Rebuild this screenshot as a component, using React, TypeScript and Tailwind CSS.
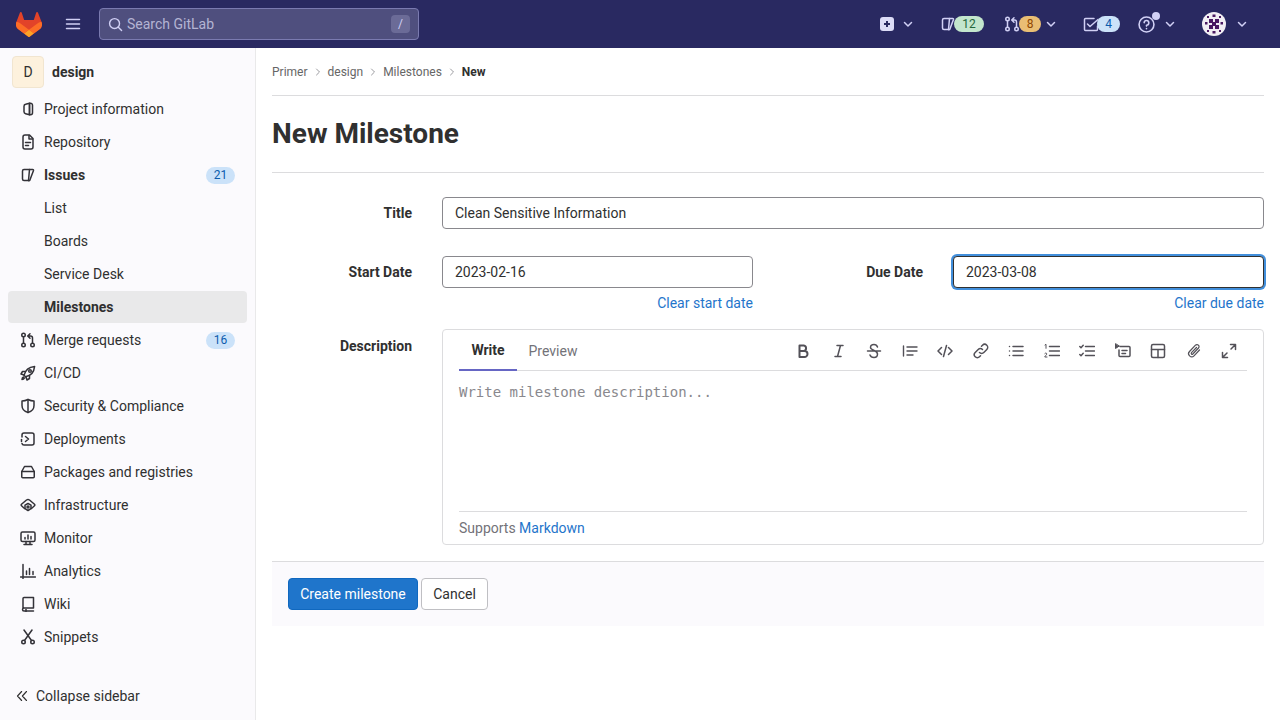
import React from "react";

type P = { children: React.ReactNode; className?: string; size?: number };
const Ic = ({ children, className = "", size = 16 }: P) => (
  <svg width={size} height={size} viewBox="0 0 16 16" fill="none" stroke="currentColor" strokeWidth="1.5" strokeLinecap="round" strokeLinejoin="round" className={"shrink-0 " + className}>
    {children}
  </svg>
);

const Chevron = ({ className = "" }: { className?: string }) => (
  <Ic className={className}><path d="M4.5 6.5 8 10l3.5-3.5" /></Ic>
);

const Logo = () => (
  <svg width="26" height="25" viewBox="0 0 25 24" className="shrink-0">
    <path d="m24.507 9.5-.034-.09L21.082.562a.896.896 0 0 0-1.694.091l-2.29 7.01H7.825L5.535.653a.898.898 0 0 0-1.694-.09L.451 9.411.416 9.5a6.297 6.297 0 0 0 2.09 7.278l.012.01.03.022 5.16 3.867 2.56 1.935 1.554 1.176a1.051 1.051 0 0 0 1.268 0l1.555-1.176 2.56-1.935 5.197-3.89.014-.01A6.297 6.297 0 0 0 24.507 9.5Z" fill="#E24329" />
    <path d="m24.507 9.5-.034-.09a11.44 11.44 0 0 0-4.56 2.051l-7.447 5.632 4.742 3.584 5.197-3.89.014-.01A6.297 6.297 0 0 0 24.507 9.5Z" fill="#FC6D26" />
    <path d="m7.707 20.677 2.56 1.935 1.555 1.176a1.051 1.051 0 0 0 1.268 0l1.555-1.176 2.56-1.935-4.743-3.584-4.755 3.584Z" fill="#FCA326" />
    <path d="M5.01 11.461a11.43 11.43 0 0 0-4.56-2.05L.416 9.5a6.297 6.297 0 0 0 2.09 7.278l.012.01.03.022 5.16 3.867 4.745-3.584-7.444-5.632Z" fill="#FC6D26" />
  </svg>
);

const icons: Record<string, React.ReactNode> = {
  info: <><path d="M9.5 2.2 5.6 3.3A2 2 0 0 0 4 5.2v5.6a2 2 0 0 0 1.6 1.9l3.9 1.1z" /><path d="M9.5 2.2h1a2 2 0 0 1 2 2v7.6a2 2 0 0 1-2 2h-1z" /></>,
  repo: <><path d="M3 3a2 2 0 0 1 2-2h4.5L13 4.5V13a2 2 0 0 1-2 2H5a2 2 0 0 1-2-2z" /><path d="M9 1.5V5h3.5M5.5 8.5h5M5.5 11.5h3" /></>,
  issues: <><path d="M9.5 2.5H4A1.5 1.5 0 0 0 2.5 4v8A1.5 1.5 0 0 0 4 13.5h4.5z" /><path d="M9.5 2.5h3.2a.8.8 0 0 1 .8 1L10 12.8a1 1 0 0 1-1.5.7" /></>,
  mr: <><circle cx="3.5" cy="3" r="1.75" /><circle cx="3.5" cy="13" r="1.75" /><circle cx="12.5" cy="13" r="1.75" /><path d="M3.5 5v6M12.5 11V6a2 2 0 0 0-2-2H8M10 1.7 7.7 4 10 6.3" /></>,
  rocket: <><path d="M5.5 11.8 4 10.3C5 6 8.5 2 14.6 1.4 14 7.500 10 11 5.500 11.8z" /><circle cx="10" cy="6" r="1.300" /><path d="M5 6.500H2.500L1 9l3 1M9.500 11v2.500L7 15l-1-3M3.500 12c-1 .5-1.500 1.500-1.500 2.500 1 0 2-.5 2.500-1.500" /></>,
  shield: <><path d="M8 1.500c2 1 4 1.500 6 1.500v4.500c0 3.500-2.500 6-6 7-3.500-1-6-3.500-6-7V3c2 0 4-.5 6-1.500z" /><path d="M8 1.500v13" /></>,
  deploy: <><path d="M2 6V4a2 2 0 0 1 2-2h8a2 2 0 0 1 2 2v8a2 2 0 0 1-2 2H4a2 2 0 0 1-2-1.500" /><path d="M5.500 5.500 8.500 8l-3 2.500" /><path d="M1.500 8.500v2" /></>,
  pkg: <><path d="M1.750 7.500h12.500v5.250a1 1 0 0 1-1 1H2.750a1 1 0 0 1-1-1z" /><path d="M1.750 7.500 4.500 2.500h7l2.750 5" /></>,
  infra: <><path d="M4.500 11.500 1.500 8.800a1 1 0 0 1 0-1.500L6.500 3a2.500 2.500 0 0 1 3 0l5 4.300a1 1 0 0 1 0 1.500l-3 2.700" /><path d="M8 6.500l3 1.700v3.400l-3 1.900-3-1.900V8.200z" /><circle cx="8" cy="10" r="1" /></>,
  monitor: <><rect x="1" y="2" width="14" height="9.500" rx="1.500" /><path d="M4 14.500h8M6 11.500v3M10 11.500v3M5 9V7.500M8 9V5M11 9V6.500" /></>,
  chart: <><path d="M.5 14h15M3 1.500V15.500M6.500 8v3.500M9.500 5.500v6M13 8.500v3" /></>,
  book: <><path d="M3 12V2.500a1 1 0 0 1 1-1h9.500v10.500H4a1.500 1.500 0 0 0 0 3h9.500" /><path d="M6 13.500v2" /></>,
  snip: <><circle cx="3.500" cy="13" r="1.750" /><circle cx="12.500" cy="13" r="1.750" /><path d="M4.500 11.500 12 1M11.500 11.500 4 1" /></>,
};

const NavRow = ({ icon, label, bold, badge, active }: { icon?: string; label: string; bold?: boolean; badge?: string; active?: boolean }) => (
  <div className={"mb-px flex h-8 items-center rounded pr-3 " + (active ? "bg-[#e9e9ea]" : "")}>
    <div className="flex w-9 justify-end pr-2 text-[#303030]">
      {icon && <Ic size={16} className="mr-0 text-[#333238]" >{icons[icon]}</Ic>}
    </div>
    <span className={"text-sm text-[#303030] " + (bold ? "font-bold" : "")}>{label}</span>
    {badge && (
      <span className="ml-auto flex h-[17px] w-[29px] items-center justify-center rounded-full bg-[#cbe2f9] text-xs text-[#0b5cad]">{badge}</span>
    )}
  </div>
);

const Sidebar = () => (
  <aside className="flex w-[256px] shrink-0 flex-col border-r border-[#e9e9ea] bg-[#fbfafd]">
    <div className="flex h-11 items-center gap-2 pl-3 pt-1 pb-0">
      <span className="flex h-8 w-8 items-center justify-center rounded border border-[#f1e5d0] bg-[#fdf1dd] text-sm text-[#303030]">D</span>
      <span className="text-sm font-bold text-[#303030]">design</span>
    </div>
    <nav className="mt-[1px] flex flex-col pl-2 pr-2">
      <NavRow icon="info" label="Project information" />
      <NavRow icon="repo" label="Repository" />
      <NavRow icon="issues" label="Issues" bold badge="21" />
      <NavRow label="List" />
      <NavRow label="Boards" />
      <NavRow label="Service Desk" />
      <NavRow label="Milestones" bold active />
      <NavRow icon="mr" label="Merge requests" badge="16" />
      <NavRow icon="rocket" label="CI/CD" />
      <NavRow icon="shield" label="Security &amp; Compliance" />
      <NavRow icon="deploy" label="Deployments" />
      <NavRow icon="pkg" label="Packages and registries" />
      <NavRow icon="infra" label="Infrastructure" />
      <NavRow icon="monitor" label="Monitor" />
      <NavRow icon="chart" label="Analytics" />
      <NavRow icon="book" label="Wiki" />
      <NavRow icon="snip" label="Snippets" />
    </nav>
    <div className="mt-auto flex h-12 items-center gap-2 pl-4 text-sm text-[#303030]">
      <Ic size={12}><path d="M7.500 2 2 8l5.500 6M14 2 8.500 8l5.500 6" /></Ic>
      <span>Collapse sidebar</span>
    </div>
  </aside>
);

const Badge = ({ children, className }: { children: React.ReactNode; className: string }) => (
  <span className={"flex h-4 items-center justify-center rounded-full text-xs " + className}>{children}</span>
);

const Header = () => (
  <header className="flex h-12 shrink-0 items-center bg-[#292961] text-[#d1d0f5]">
    <div className="ml-4 flex items-center"><Logo /></div>
    <svg width="16" height="16" viewBox="0 0 16 16" className="ml-[23px] shrink-0" stroke="#d1d0f5" strokeWidth="1.500" strokeLinecap="round"><path d="M1.500 3.500h13M1.500 8h13M1.500 12.500h13" /></svg>
    <div className="ml-[18px] flex h-8 w-[320px] items-center rounded border border-[#7a7ab0] bg-[#4f4f7e] pl-2 pr-2 text-sm text-[#b4b4d3]">
      <Ic size={15} className="text-[#d1d0f5]"><circle cx="7" cy="7" r="5.300" /><path d="m11 11 3.500 3.500" /></Ic>
      <span className="ml-[4px]">Search GitLab</span>
      <span className="ml-auto flex h-[18px] w-[19px] items-center justify-center rounded-sm bg-[#6b6b97] text-xs text-[#d1d0f5]">/</span>
    </div>
    <div className="ml-auto flex items-center pr-[30px]">
      <svg width="14" height="14" viewBox="0 0 14 14" className="shrink-0"><rect width="14" height="14" rx="3" fill="#dcdcf7" /><path d="M7 4v6M4 7h6" stroke="#292961" strokeWidth="2" /></svg>
      <Chevron className="ml-[6px]" />
      <Ic className="ml-6">{icons.issues}</Ic>
      <Badge className="-ml-[2px] w-[30px] bg-[#c3e6cd] text-[#24663b]">12</Badge>
      <Ic className="ml-5">{icons.mr}</Ic>
      <Badge className="-ml-[1px] w-[22px] bg-[#e9be74] text-[#8f4700]">8</Badge>
      <Chevron className="ml-[2px]" />
      <Ic className="ml-6">
        <path d="M11 2.500H2.500A1 1 0 0 0 1.500 3.500v10a1 1 0 0 0 1 1h11a1 1 0 0 0 1-1V10" /><path d="m4.500 8 2.500 2.500 8-7" />
      </Ic>
      <Badge className="-ml-[2px] w-[23px] bg-[#cbe2f9] text-[#0b5cad]">4</Badge>
      <span className="relative ml-[18px] flex">
        <Ic size={17}><circle cx="8" cy="8" r="7" /><path d="M5.800 6.200A2.200 2.200 0 1 1 8 8.700v.8M8 11.800v.1" /></Ic>
        <span className="absolute -right-[5px] -top-[4px] h-2 w-2 rounded-full bg-[#d1d0f5]" />
      </span>
      <Chevron className="ml-[7px]" />
      <svg width="24" height="24" viewBox="0 0 24 24" className="ml-6 shrink-0">
        <circle cx="12" cy="12" r="12" fill="#f1eef3" />
        <g fill="#4a1a62">
          <rect x="7" y="7" width="4" height="4" /><rect x="13" y="7" width="4" height="4" />
          <rect x="7" y="13" width="4" height="4" /><rect x="13" y="13" width="4" height="4" />
          <rect x="10" y="10" width="4" height="4" />
          <rect x="3" y="10" width="2.500" height="2.500" /><rect x="18.500" y="10" width="2.500" height="2.500" />
          <rect x="10.500" y="2.500" width="3" height="2.500" /><rect x="10.500" y="19" width="3" height="2.500" />
          <rect x="5" y="4" width="2" height="2" /><rect x="17" y="4" width="2" height="2" />
          <rect x="5" y="18" width="2" height="2" /><rect x="17" y="18" width="2" height="2" />
        </g>
      </svg>
      <Chevron className="ml-[8px]" />
    </div>
  </header>
);

const Sep = () => (
  <Ic size={8} className="mx-[6px] text-[#9a9a9f]"><path d="m5 2 6 6-6 6" strokeWidth="2" /></Ic>
);

const Input = ({ value, focus }: { value: string; focus?: boolean }) => (
  <div className={"flex h-8 w-full items-center rounded bg-white px-3 text-sm text-[#303030] " + (focus ? "border border-[#303030] shadow-[0_0_0_2px_#428fdc]" : "border border-[#89888d]")}>{value}</div>
);

const Tool = ({ children }: { children: React.ReactNode }) => (
  <span className="flex w-[35.500px] justify-center text-[#535158]">{children}</span>
);

const Toolbar = () => (
  <div className="ml-auto flex items-center pr-[-1px]">
    <Tool><Ic strokeW="" ><path d="M4.500 2.500h4.300a2.800 2.800 0 0 1 0 5.500H4.500zM4.500 8h5a3 3 0 0 1 0 6h-5z" strokeWidth="2" /></Ic></Tool>
    <Tool><Ic><path d="M6 2.500h6M4 13.500h6M9.500 2.500l-3 11" /></Ic></Tool>
    <Tool><Ic><path d="M1.500 8h13M11.500 4c-.5-1.500-2-2.500-3.500-2.500C6 1.500 4.500 2.800 4.500 4.500c0 3 7 2.500 7 6.500 0 2-1.500 3.500-3.500 3.500-2 0-3.500-1-4-2.500" /></Ic></Tool>
    <Tool><Ic><path d="M1.500 3v10M5 4h10M5 8h10M5 12h6" strokeWidth="1.400" /></Ic></Tool>
    <Tool><Ic><path d="M4.500 4.500 1 8l3.500 3.500M11.500 4.500 15 8l-3.500 3.500M9.500 2.500l-3 11" /></Ic></Tool>
    <Tool><Ic><path d="M6.500 9.500a3 3 0 0 0 4.300 0l3-3a3 3 0 0 0-4.300-4.300L8.500 3.200" /><path d="M9.500 6.500a3 3 0 0 0-4.300 0l-3 3a3 3 0 0 0 4.300 4.300l1-1" /></Ic></Tool>
    <Tool><Ic><path d="M1.500 3.500v.01M1.500 8v.01M1.500 12.500v.01M5 3.500h10M5 8h10M5 12.500h10" /></Ic></Tool>
    <Tool><Ic><path d="M5.500 3.500h10M5.500 8h10M5.500 12.500h10" /><path d="M1 2l1-.7v4M.8 10.500c.5-.8 2-.6 2 .5s-2 1.500-2 3h2.200" strokeWidth="1" /></Ic></Tool>
    <Tool><Ic><path d="m.8 3.500 1.200 1.200 2.200-2.500M.8 11.500 2 12.700l2.200-2.500M6.500 3.500h9M6.500 8h9M6.500 12.500h9" /></Ic></Tool>
    <Tool><Ic><path d="M5 3.500h9a1 1 0 0 1 1 1v8a1 1 0 0 1-1 1H5a1 1 0 0 1-1-1V7" /><path d="M7 7.500h5M7 10.500h3.500" /><path d="M.5 1v4.500L4 3.200z" fill="currentColor" strokeWidth="1" /></Ic></Tool>
    <Tool><Ic><rect x="1.500" y="1.500" width="13" height="13" rx="1.500" /><path d="M1.500 6.500h13M8 6.500v8" /></Ic></Tool>
    <Tool><Ic strokeW=""><path d="M13.500 7 8 12.800a3 3 0 0 1-4.500-4.300l6-6.300a2 2 0 0 1 3 2.800L6.800 11a.9.900 0 0 1-1.300-1.300l5-5.200" strokeWidth="1.200" /></Ic></Tool>
    <Tool><Ic><path d="M9.500 1.500h5v5M14.500 1.500 10 6M6.500 14.500h-5v-5M1.500 14.500 6 10" /></Ic></Tool>
  </div>
);

const Form = () => (
  <div className="flex flex-col">
    <div className="flex items-center gap-[30px]">
      <label className="w-[140px] text-right text-sm font-bold text-[#303030]">Title</label>
      <div className="flex-1"><Input value="Clean Sensitive Information" /></div>
    </div>
    <div className="mt-[27px] flex gap-[30px]">
      <label className="flex h-8 w-[140px] items-center justify-end text-sm font-bold text-[#303030]">Start Date</label>
      <div className="flex-1">
        <div className="flex gap-[30px]">
          <div className="flex w-[311px] flex-col items-end">
            <Input value="2023-02-16" />
            <a className="mt-[5px] text-sm leading-5 text-[#1f75cb]">Clear start date</a>
          </div>
          <div className="flex flex-1 gap-[30px]">
            <label className="flex h-8 flex-1 items-center justify-end text-sm font-bold text-[#303030]">Due Date</label>
            <div className="flex w-[311px] flex-col items-end">
              <Input value="2023-03-08" focus />
              <a className="mt-[5px] text-sm leading-5 text-[#1f75cb]">Clear due date</a>
            </div>
          </div>
        </div>
      </div>
    </div>
    <div className="mt-[16px] flex gap-[30px]">
      <label className="w-[140px] pt-[7px] text-right text-sm font-bold text-[#303030]">Description</label>
      <div className="flex h-[216px] flex-1 flex-col rounded border border-[#dcdcde] px-4">
        <div className="flex h-10 items-stretch border-b border-[#dcdcde] mt-px">
          <span className="flex w-[58px] items-center justify-center border-b-2 border-[#6666c4] -mb-px text-sm font-bold text-[#303030]">Write</span>
          <span className="flex w-[72px] items-center justify-center text-sm text-[#737278]">Preview</span>
          <Toolbar />
        </div>
        <div className="flex-1 pt-[11px] font-['DejaVu_Sans_Mono',monospace] text-sm leading-[20px] text-[#89888d]">Write milestone description...</div>
        <div className="flex h-[33px] items-center border-t border-[#dcdcde] text-sm text-[#737278]">
          <span>Supports&nbsp;</span><a className="text-[#1f75cb]">Markdown</a>
        </div>
      </div>
    </div>
    <div className="mt-4 flex h-[65px] items-center gap-[3px] border-t border-[#dcdcde] bg-[#fbfafd] px-4">
      <button className="h-8 w-[130px] rounded border border-[#1068bf] bg-[#1f75cb] text-sm text-white">Create milestone</button>
      <button className="h-8 w-[67px] rounded border border-[#bfbfc3] bg-white text-sm text-[#303030]">Cancel</button>
    </div>
  </div>
);

export default function App() {
  return (
    <div className="flex h-[720px] w-[1280px] flex-col overflow-hidden bg-white font-['Roboto',sans-serif]">
      <Header />
      <div className="flex flex-1">
        <Sidebar />
        <main className="flex-1 px-4">
          <div className="flex h-12 items-center border-b border-[#dcdcde] text-xs text-[#666]">
            <span>Primer</span><Sep /><span>design</span><Sep /><span>Milestones</span><Sep /><span className="font-bold text-[#303030]">New</span>
          </div>
          <div className="flex h-[77px] items-center border-b border-[#dcdcde]">
            <h1 className="text-[28px] font-bold text-[#303030]">New Milestone</h1>
          </div>
          <div className="pt-6"><Form /></div>
        </main>
      </div>
    </div>
  );
}
